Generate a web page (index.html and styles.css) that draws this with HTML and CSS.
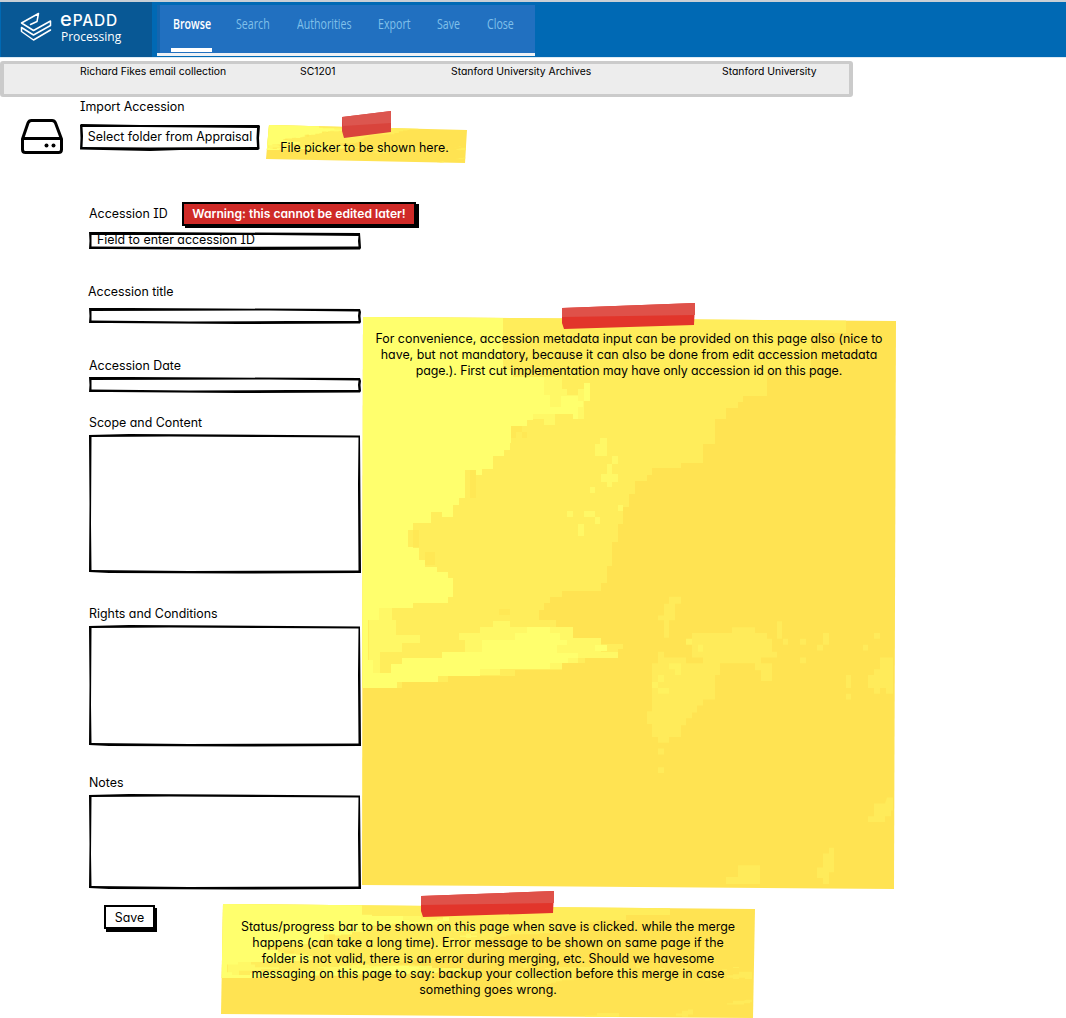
FILE: index.html
```html
<!DOCTYPE html>
<html lang="en">
<head>
<meta charset="utf-8">
<title>ePADD Processing</title>
<link rel="stylesheet" href="styles.css">
</head>
<body>
<svg class="defs" width="0" height="0">
  <symbol id="paper" viewBox="362 316 534 574" preserveAspectRatio="none">
    <path fill="#ffe352" d="M362 316H896V890H362z"/>
    <path fill="#ffed5b" d="M362 316H846V333H811V372H767V396H743V402H738V408H726V419H715V444H703V463H681V468H652V475H647V481H635V494H629V507H623V524H618V542H612V566H607V583H601V591H562V597H550V603H544V610H539V620H556V627H562V632H573V638H583V644H623V649H618V658H585V663H562V670H515V676H448V682H402V688H362z"/>
    <path fill="#fff866" d="M392 603H413V608H392V620H396V635H420V643H402V652H380V673H369V615H379V608H392zM493 621H510V627H527V633H550V627H573V638H601V652H618V658H578V663H562V669H500V675H465V640H459V633H480V627H493zM562 389H567V395H578V389H590V383H584V419H573V413H555V425H544V419H533V413H550V395H544V377H562zM600 438H607V456H595V444H600zM612 456H618V464H612zM607 464H612V474H618V482H612V487H607V482H601V474H607zM590 487H595V493H590zM618 505H623V511H618zM567 511H573V517H567zM584 511H595V517H600V524H595V517H584zM578 524H584V536H578zM391 524H402V529H391zM420 505H426V500H436V512H420z"/>
    <path fill="#ffff6d" d="M362 316H503V370H513V377H544V395H550V407H561V396H578V401H584V383H590V401H583V407H578V419H573V414H533V420H527V426H511V438H516V443H510V450H504V456H493V469H482V475H476V470H465V498H459V505H453V517H442V512H431V523H413V530H408V547H419V560H425V567H437V572H448V578H453V597H448V603H413V608H379V620H368V660H373V673H391V664H402V658H442V652H482V640H515V633H527V627H550V633H560V640H567V645H557V653H578V658H568V663H550V669H480V676H438V682H397V688H362zM595 645H607V651H595z"/>
    <path fill="#ffe553" d="M511 426H522V438H527V432H516V443H511zM470 470H476V498H470zM413 530H419V548H413zM425 552H435V565H425zM499 609H510V615H499z" opacity=".7"/>
    <g transform="matrix(1 0 0 1.167 0 -48.5)">
      <path fill="#ffeb5a" d="M669 553H681V559H675V573H669V588H664V573H658V569H664V559H669zM692 584H732V579H755V584H767V589H777V574H782V589H772V600H777V605H761V610H772V625H761V616H755V610H703V605H692zM658 600H664V605H686V610H720V620H715V641H703V646H697V652H692V657H686V663H681V673H669V678H658V673H652V662H647V651H652V610H658zM658 683H664V688H658zM658 699H664V704H658zM783 589H788V594H783zM800 589H806V594H800zM800 605H806V610H800zM823 584H829V594H823zM817 594H823V599H817zM874 584H880V589H874zM863 594H868V599H863zM880 605H893V636H886V631H880V636H874V631H868V620H874V615H880zM846 620H851V631H846zM846 636H851V641H846zM887 725H893V736H891V741H885V746H868V741H874V730H885zM829 768H834V789H829V799H823V794H817V785H823V773H829zM738 783H760V799H726V793H738z"/>
      <path fill="#fff25f" d="M686 589H692V594H686zM698 594H703V600H698zM669 610H681V620H675V615H669zM652 626H664V620H658V636H669V631H652z"/>
    </g>
  </symbol>
</svg>

<header class="topbar">
  <div class="brand">
    <svg class="brand-mark" width="32" height="30" viewBox="0 0 32 30" fill="none" stroke="#fff" stroke-width="1.500" stroke-linejoin="round" stroke-linecap="round">
      <path d="M10.500 12.500 17 9.500 18.500 1.500 1.500 11 13.500 18.500 30.500 9V13.500L13.500 23 1.500 15.500V19.500L13.500 28 30.500 18"/>
    </svg>
    <div class="brand-text">
      <div class="wordmark"><span class="wordmark-e">e</span>PADD</div>
      <div class="product">Processing</div>
    </div>
  </div>
  <nav class="nav">
    <a class="tab active"><span>Browse</span></a>
    <a class="tab t2"><span>Search</span></a>
    <a class="tab t3"><span>Authorities</span></a>
    <a class="tab t4"><span>Export</span></a>
    <a class="tab t5"><span>Save</span></a>
    <a class="tab t6"><span>Close</span></a>
  </nav>
</header>

<div class="meta">
  <span>Richard Fikes email collection</span>
  <span>SC1201</span>
  <span>Stanford University Archives</span>
  <span>Stanford University</span>
</div>

<section class="import">
  <svg class="drive" width="44" height="38" viewBox="0 0 44 38" fill="none" stroke="#000" stroke-width="3" stroke-linejoin="round">
    <path d="M2.500 21 8 5Q9 2.500 11.500 2.500H32Q34.500 2.500 35.500 5L41.500 21V31.500Q41.500 34.500 38.500 34.500H5.500Q2.500 34.500 2.500 31.500zM2.500 20.500H41.500"/>
    <g fill="#000" stroke="none"><circle cx="26.500" cy="27.500" r="2"/><circle cx="33.500" cy="27.500" r="2"/></g>
  </svg>
  <div class="picker">
    <div class="label">Import Accession</div>
    <button class="sketch select">
      <svg viewBox="0 0 180 27" width="180" height="27"><path fill-rule="evenodd" d="M0 1 1 0 60 1 179 1 180 2 179 14 179.500 25 178 26 100 26 70 27 0 25.500 .5 14zM2.500 3 3 12 2.500 23 70 23.500 177 23 176.500 14 177 4 60 3z"/></svg>
      <span>Select folder from Appraisal</span>
    </button>
  </div>
  <aside class="note note-picker">
    <div class="paper"><svg width="100%" height="100%"><use href="#paper"/></svg></div>
    <svg class="tape" width="50" height="27" viewBox="0 0 50 27"><path fill="#d9443c" d="M0 6 49 0 49 21 2 27 0 20z"/><path fill="#dc564f" d="M0 6 49 0V12L1 15z"/></svg>
    <p>File picker to be shown here.</p>
  </aside>
</section>

<div class="id-row">
  <span class="label">Accession ID</span>
  <strong class="warning">Warning: this cannot be edited later!</strong>
</div>

<main class="work">
  <form class="form">
    <div class="sketch field id-field">
      <svg viewBox="0 0 272 18" width="272" height="18"><path fill-rule="evenodd" d="M0 0 40 0 130 .5 271 1 271.500 8 272 16 271 17.500 150 18 20 17 0 17 .5 9zM2.500 3 2.500 9 2.500 14.500 100 15 269.500 14.500 269 9 269.500 4 180 3z"/></svg>
      <span>Field to enter accession ID</span>
    </div>
    <label class="label l-title">Accession title</label>
    <div class="sketch field thin">
      <svg viewBox="0 0 272 16" width="272" height="16"><path fill-rule="evenodd" d="M0 0 40 0 130 .5 271 1 272 4 271.500 8 272 14 271 15.500 150 16 20 15 0 15 .5 8zM2.500 3 2.500 8 2.500 12.500 100 13.500 200 13 269.500 13 269 8 269.500 3.500 180 2.500z"/></svg>
    </div>
    <label class="label l-date">Accession Date</label>
    <div class="sketch field thin">
      <svg viewBox="0 0 272 16" width="272" height="16"><path fill-rule="evenodd" d="M0 0 40 0 130 .5 271 1 272 4 271.500 8 272 14 271 15.500 150 16 20 15 0 15 .5 8zM2.500 3 2.500 8 2.500 12.500 100 13.500 200 13 269.500 13 269 8 269.500 3.500 180 2.500z"/></svg>
    </div>
    <label class="label l-scope">Scope and Content</label>
    <div class="sketch field scope">
      <svg viewBox="0 0 272 140" width="272" height="140"><path fill-rule="evenodd" d="M0 1 40 0 130 .5 271 1.500 271.500 70 272 139 150 139.500 20 139 0 138 .5 70zM2.500 3 2 90 2.500 136 100 137 269.500 136.500 269 50 269.500 3.500 180 3 80 2.500z"/></svg>
    </div>
    <label class="label l-rights">Rights and Conditions</label>
    <div class="sketch field rights">
      <svg viewBox="0 0 272 122" width="272" height="122"><path fill-rule="evenodd" d="M0 1 40 0 130 .5 271 1.500 271.500 60 272 121 150 121.500 20 121 0 120 .5 60zM2.500 3 2 80 2.500 118 100 119 269.500 118.500 269 50 269.500 3.500 180 3 80 2.500z"/></svg>
    </div>
    <label class="label l-notes">Notes</label>
    <div class="sketch field notes">
      <svg viewBox="0 0 272 96" width="272" height="96"><path fill-rule="evenodd" d="M0 1 40 0 130 .5 271 1.500 271.500 50 272 95 150 95.500 20 95 0 94 .5 50zM2.500 3 2 60 2.500 92 100 93 269.500 92.500 269 40 269.500 3.500 180 3 80 2.500z"/></svg>
    </div>
  </form>
  <aside class="note note-meta">
    <div class="paper"><svg width="100%" height="100%"><use href="#paper"/></svg></div>
    <svg class="tape" width="133" height="26" viewBox="0 0 133 26"><path fill="#e2352b" d="M0 5 133 0 132 22 2 26 0 20z"/><path fill="#df5149" d="M0 5 133 0V12L0 14z"/></svg>
    <p><span>For convenience, accession metadata input can be provided on this page also (nice to</span>
    <span>have, but not mandatory, because it can also be done from edit accession metadata</span>
    <span class="tight">page.). First cut implementation may have only accession id on this page.</span></p>
  </aside>
</main>

<footer class="foot">
  <button class="save">Save</button>
  <aside class="note note-status">
    <div class="paper"><svg width="100%" height="100%"><use href="#paper"/></svg></div>
    <svg class="tape" width="133" height="26" viewBox="0 0 133 26"><path fill="#e2352b" d="M0 5 133 0 132 22 2 26 0 20z"/><path fill="#df5149" d="M0 5 133 0V12L0 14z"/></svg>
    <p><span>Status/progress bar to be shown on this page when save is clicked. while the merge</span>
    <span>happens (can take a long time). Error message to be shown on same page if the</span>
    <span>folder is not valid, there is an error during merging, etc. Should we havesome</span>
    <span>messaging on this page to say: backup your collection before this merge in case</span>
    <span>something goes wrong.</span></p>
  </aside>
</footer>
</body>
</html>
```
FILE: styles.css
```css
* { box-sizing: border-box; }

body {
  margin: 0;
  width: 1066px;
  height: 1018px;
  overflow: hidden;
  background: #fff;
  color: #000;
  font: 12.400px/16px Inter, "Liberation Sans", sans-serif;
  font-feature-settings: "cv11", "cv08";
}

.defs { display: block; height: 0; }
button { font: inherit; font-feature-settings: inherit; letter-spacing: inherit; color: inherit; padding: 0; border: 0; background: #fff; }
p { margin: 0; }

.topbar {
  display: flex;
  height: 58px;
  padding-left: 1px;
  border-top: 2px solid #c8cfd6;
  border-bottom: 1px solid #dceaf4;
  background: #0069b4;
}
.brand {
  display: flex;
  width: 151px;
  padding: 10px 0 0 19px;
  background: #085895;
}
.brand-mark { flex: none; }
.brand-text { padding-left: 8px; color: #fff; white-space: nowrap; }
.wordmark { padding-top: 1px; font: 500 15.500px/16px Inter, sans-serif; letter-spacing: .8px; }
.wordmark-e { font-size: 20px; line-height: 10px; letter-spacing: 1px; }
.product { font: 12px/17px "Open Sans", sans-serif; padding-left: 1px; margin-top: -1px; }

.nav {
  display: flex;
  width: 378px;
  height: 51px;
  margin: 3px 0 0 5px;
  padding-left: 16px;
  background: linear-gradient(90deg, #1565ae 3px, #2170c0 3px);
  border-bottom: 3px solid #eef1f5;
}
.tab {
  width: 63px;
  padding-top: 9px;
  font: 14px/20px "Open Sans", sans-serif;
  color: #80c0ea;
  white-space: nowrap;
}
.tab span { display: block; transform: scaleX(.76); transform-origin: 0 0; }
.tab.active { color: #fff; font-weight: 600; }
.tab.active::after { content: ""; display: block; width: 41px; height: 4px; margin: 14px 0 0 -2px; background: #fff; }
.tab.t2 { width: 61px; }
.tab.t3 { width: 81px; }
.tab.t4 { width: 59px; }
.tab.t5 { width: 50px; }
.tab.t6 { width: 40px; }

.meta {
  display: grid;
  grid-template-columns: 220px 151px 271px 1fr;
  width: 853px;
  height: 36px;
  margin-top: 3px;
  padding-left: 76px;
  border: solid #cbcbcb;
  border-width: 3px 4px;
  border-radius: 3px;
  background: #ededed;
  font-size: 10.400px;
  line-height: 15px;
  white-space: nowrap;
}

.import { display: flex; height: 104px; padding-left: 20px; }
.drive { margin-top: 21px; }
.picker { margin-left: 16px; width: 180px; }
.label { display: block; line-height: 18px; white-space: nowrap; }
.picker .label { margin-top: 1px; }

.sketch { position: relative; display: block; background: #fff; }
.sketch > svg { position: absolute; left: 0; top: 0; display: block; }
.select { width: 180px; height: 27px; margin-top: 8px; padding-bottom: 1px; white-space: nowrap; text-align: center; }

.note { position: relative; text-align: center; }
.note p { position: relative; white-space: nowrap; }
.note p span { display: block; }
.note p .tight { letter-spacing: -.09px; }
.paper { position: absolute; inset: 0; }
.paper svg { display: block; }
.tape { position: absolute; z-index: 1; }

.note-picker { width: 201px; height: 40px; margin: 27px 0 0 6px; padding: 16px 4px 0 0; }
.note-picker .paper { clip-path: polygon(3px 1px, 201px 6px, 199px 39px, 0 35px); }
.note-picker .tape { left: 76px; top: -13px; }

.id-row { display: flex; height: 26px; padding-left: 89px; }
.id-row .label { width: 93px; padding-top: 4px; }
.warning {
  width: 234px;
  height: 24px;
  margin-top: 1px;
  background: #cf2a27;
  border: 2px solid #000;
  box-shadow: 3px 2px 0 #000;
  color: #fff;
  font-size: 12.100px;
  line-height: 20px;
  font-weight: 600;
  text-align: center;
  white-space: nowrap;
}

.work { display: flex; height: 677px; padding: 5px 0 0 89px; }
.form { width: 272px; }
.id-field { height: 18px; overflow: hidden; padding-left: 8px; line-height: 15px; }
.thin { height: 16px; }
.scope { height: 140px; }
.rights { height: 122px; }
.notes { height: 96px; }
.l-title { margin: 33px 0 7px -1px; }
.l-date { margin: 33px 0 2px; }
.l-scope { margin: 21px 0 2px; }
.l-rights { margin: 31px 0 2px; }
.l-notes { margin: 27px 0 2px; }

.note-meta { width: 534px; height: 574px; margin: 84px 0 0 1px; padding-top: 15px; }
.note-meta .paper { clip-path: polygon(1px 1px, 534px 5px, 532px 573px, 0 569px); }
.note-meta .tape { left: 200px; top: -13px; }

.foot { display: flex; padding-left: 104px; }
.save {
  width: 51px;
  height: 24px;
  margin-top: 1px;
  padding-top: 1px;
  border: 2px solid #000;
  box-shadow: 2px 3px 0 #000;
}
.note-status { width: 534px; height: 114px; margin-left: 66px; padding-top: 15px; line-height: 15.800px; }
.note-status .paper { clip-path: polygon(2px 0, 534px 5px, 532px 114px, 0 110px); }
.note-status .tape { left: 200px; top: -13px; }
```
